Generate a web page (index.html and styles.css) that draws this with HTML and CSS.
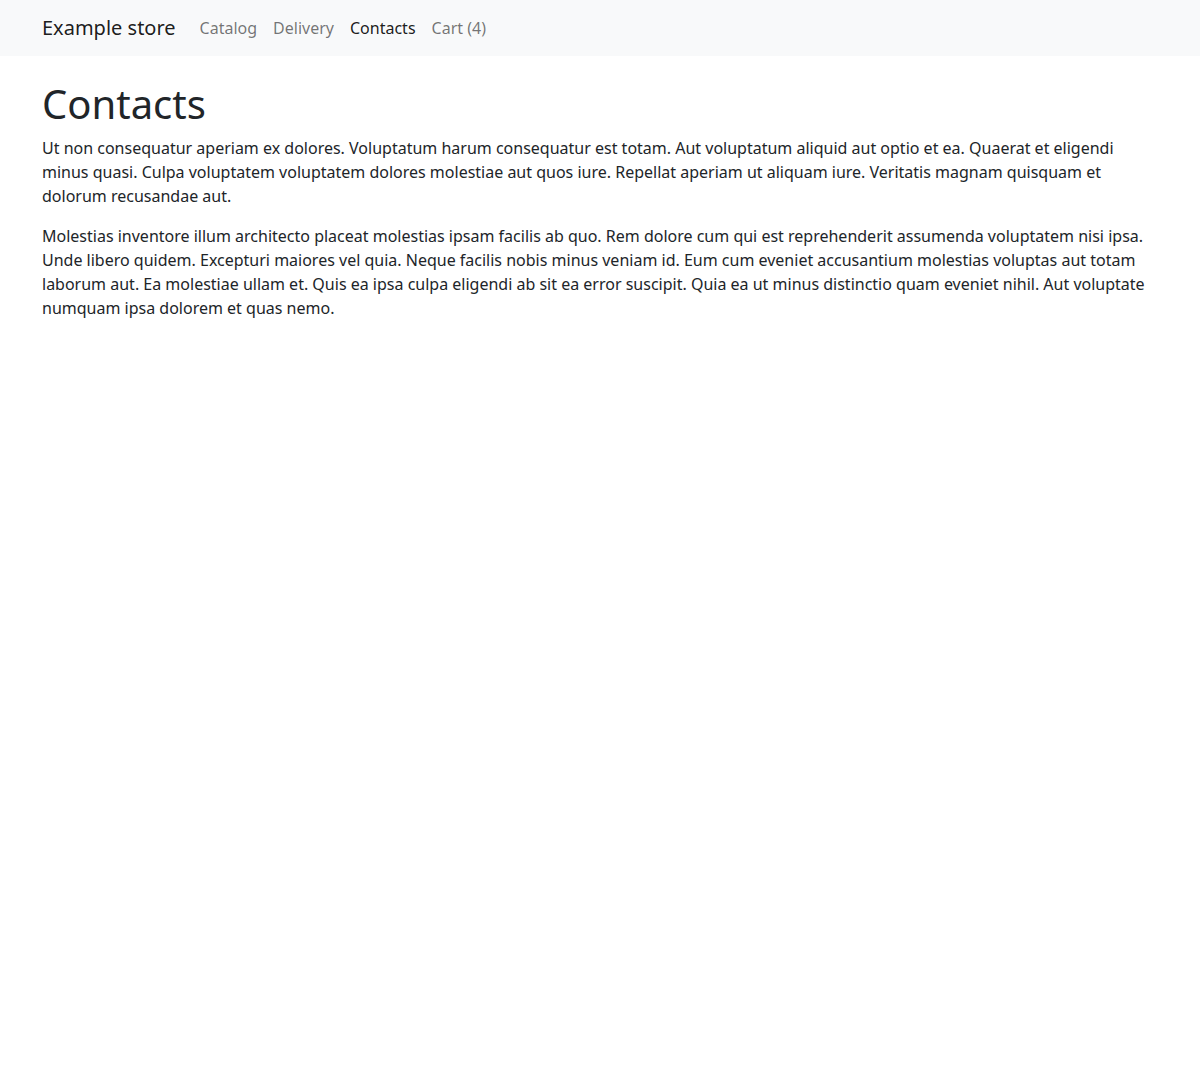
FILE: index.html
```html
<!DOCTYPE html>
<html lang="en">
<head>
<meta charset="utf-8">
<title>Contacts</title>
<link rel="stylesheet" href="styles.css">
</head>
<body>
<nav class="navbar">
  <div class="container nav-inner">
    <a class="brand" href="#">Example store</a>
    <ul class="nav">
      <li><a class="nav-link" href="#">Catalog</a></li>
      <li><a class="nav-link" href="#">Delivery</a></li>
      <li><a class="nav-link active" href="#">Contacts</a></li>
      <li><a class="nav-link" href="#">Cart (4)</a></li>
    </ul>
  </div>
</nav>
<main class="container content">
  <h1>Contacts</h1>
  <p>Ut non consequatur aperiam ex dolores. Voluptatum harum consequatur est totam. Aut voluptatum aliquid aut optio et ea. Quaerat et eligendi minus quasi. Culpa voluptatem voluptatem dolores molestiae aut quos iure. Repellat aperiam ut aliquam iure. Veritatis magnam quisquam et dolorum recusandae aut.</p>
  <p>Molestias inventore illum architecto placeat molestias ipsam facilis ab quo. Rem dolore cum qui est reprehenderit assumenda voluptatem nisi ipsa. Unde libero quidem. Excepturi maiores vel quia. Neque facilis nobis minus veniam id. Eum cum eveniet accusantium molestias voluptas aut totam laborum aut. Ea molestiae ullam et. Quis ea ipsa culpa eligendi ab sit ea error suscipit. Quia ea ut minus distinctio quam eveniet nihil. Aut voluptate numquam ipsa dolorem et quas nemo.</p>
</main>
</body>
</html>
```

FILE: styles.css
```css
* { box-sizing: border-box; }
html, body {
  margin: 0;
  padding: 0;
}
body {
  font-family: "Noto Sans", "Liberation Sans", sans-serif;
  font-size: 16px;
  line-height: 1.5;
  color: #212529;
  background: #fff;
}
.container {
  width: 100%;
  max-width: 1140px;
  margin: 0 auto;
  padding: 0 12px;
}
.navbar {
  background: #f8f9fa;
  padding: 8px 0;
}
.nav-inner {
  display: flex;
  align-items: center;
}
.brand {
  font-size: 20px;
  line-height: 30px;
  padding: 5px 0;
  margin-right: 16px;
  color: rgba(0, 0, 0, 0.9);
  text-decoration: none;
  white-space: nowrap;
}
.nav {
  display: flex;
  list-style: none;
  margin: 0;
  padding: 0;
}
.nav-link {
  display: block;
  padding: 8px 8px;
  color: rgba(0, 0, 0, 0.55);
  text-decoration: none;
}
.nav-link.active {
  color: rgba(0, 0, 0, 0.9);
}
.content {
  margin-top: 24px;
}
h1 {
  font-size: 40px;
  font-weight: 400;
  line-height: 1.2;
  margin: 0 0 8px;
}
p {
  margin: 0 0 16px;
}
```
